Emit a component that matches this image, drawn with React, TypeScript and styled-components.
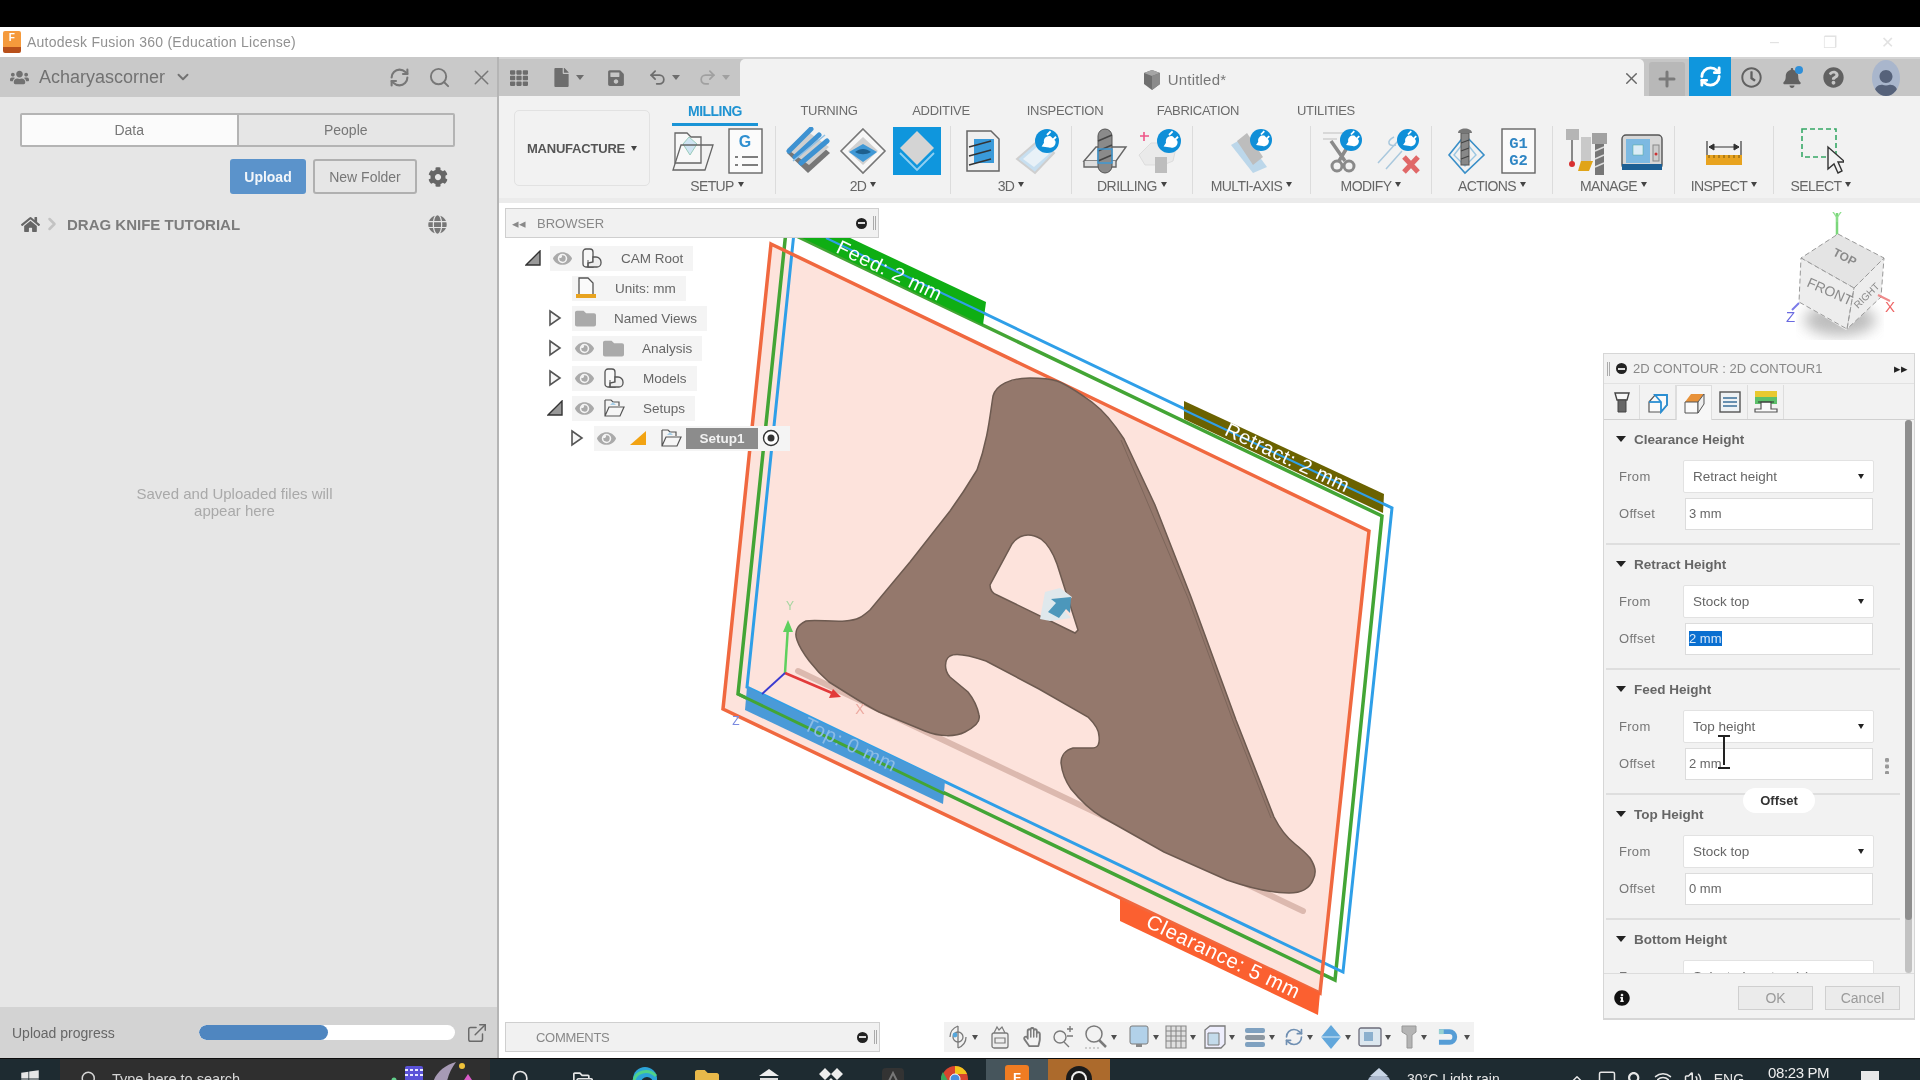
import React from "react";
import styled, { createGlobalStyle } from "styled-components";
import {
  FaBell,
  FaCog,
  FaEye,
  FaFile,
  FaFolder,
  FaGlobe,
  FaHome,
  FaInfoCircle,
  FaQuestionCircle,
  FaRegClock,
  FaRegFolderOpen,
  FaRegHandPaper,
  FaSave,
  FaSearch,
  FaTh,
  FaUser,
  FaUsers,
  FaWindows,
} from "react-icons/fa";
import {
  ChevronDown,
  ChevronRight,
  ChevronUp,
  ExternalLink,
  Monitor,
  Plus,
  RefreshCw,
  Redo2,
  Search,
  Undo2,
  Volume2,
  Wifi,
  X,
} from "lucide-react";

const GlobalStyle = createGlobalStyle`
  html, body {
    margin: 0;
    padding: 0;
    background: #fff;
    overflow: hidden;
  }
  * {
    box-sizing: border-box;
  }
`;

const Page = styled.div`
  width: 1920px;
  height: 1080px;
  display: flex;
  flex-direction: column;
  font-family: "Liberation Sans", Arial, sans-serif;
  background: #fff;
  overflow: hidden;
  filter: blur(0.45px);
`;
const BlackBar = styled.div`
  height: 27px;
  background: #000;
  flex: none;
`;
const TitleBar = styled.div`
  height: 30px;
  flex: none;
  display: flex;
  align-items: center;
  padding-left: 3px;
  background: #fff;
  color: #919191;
  font-size: 14px;
  letter-spacing: 0.25px;
  gap: 6px;
`;
const AppLogo = styled.div`
  width: 18px;
  height: 22px;
  border-radius: 2px;
  background: linear-gradient(#f59a3c 0 75%, #b8501a 75%);
  color: #fff;
  font-size: 10px;
  font-weight: 700;
  display: flex;
  justify-content: center;
  padding-top: 1px;
`;
const WindowControls = styled.div`
  margin-left: auto;
  display: flex;
  color: #e2e2e2;
  font-size: 16px;
  width: 150px;
  justify-content: space-between;
  padding-right: 26px;
`;
const Main = styled.div`
  flex: 1;
  display: flex;
  min-height: 0;
`;

/* data panel */
const DataPanel = styled.div`
  width: 499px;
  flex: none;
  display: flex;
  flex-direction: column;
  background: #e6e6e6;
  border-right: 2px solid #b5b5b5;
`;
const PanelHeader = styled.div`
  height: 40px;
  flex: none;
  background: #c9c9c9;
  display: flex;
  align-items: center;
  padding: 0 3px 0 10px;
  color: #727272;
  font-size: 18px;
`;
const ProjectName = styled.span`
  margin: 0 9px 0 10px;
`;
const HeaderTools = styled.div`
  margin-left: auto;
  display: flex;
  align-items: center;
  gap: 18px;
  color: #777;
`;
const DataTabs = styled.div`
  margin: 16px 42px 0 20px;
  height: 34px;
  display: flex;
  border: 2px solid #b4b4b4;
  border-radius: 2px;
`;
const DataTab = styled.div<{ $active?: boolean }>`
  flex: 1;
  display: flex;
  align-items: center;
  justify-content: center;
  font-size: 14px;
  color: #777;
  background: ${(p) => (p.$active ? "#fbfbfb" : "#e6e6e6")};
  border-right: ${(p) => (p.$active ? "2px solid #b4b4b4" : "none")};
`;
const DataActions = styled.div`
  display: flex;
  justify-content: flex-end;
  align-items: center;
  height: 35px;
  margin-top: 12px;
  padding-right: 49px;
  gap: 7px;
`;
const UploadButton = styled.div`
  width: 76px;
  height: 35px;
  background: #5b93cb;
  border-radius: 3px;
  color: #f2f6fa;
  font-weight: 700;
  font-size: 14px;
  display: flex;
  align-items: center;
  justify-content: center;
`;
const NewFolderButton = styled.div`
  width: 104px;
  height: 35px;
  border: 2px solid #b0b0b0;
  border-radius: 3px;
  color: #777;
  font-size: 14px;
  display: flex;
  align-items: center;
  justify-content: center;
  margin-right: 4px;
`;
const GearWrap = styled.div`
  color: #666;
  display: flex;
`;
const Breadcrumb = styled.div`
  display: flex;
  align-items: center;
  margin-top: 20px;
  padding: 0 50px 0 21px;
  height: 20px;
  color: #7c7c7c;
  font-size: 15px;
  font-weight: 700;
`;
const CrumbSep = styled.span`
  color: #c3c3c3;
  display: flex;
  margin: 0 5px 0 2px;
`;
const GlobeWrap = styled.div`
  margin-left: auto;
  color: #777;
  display: flex;
`;
const EmptyMessage = styled.div`
  flex: 1;
  padding: 251px 28px 0 0;
  text-align: center;
  font-size: 15px;
  line-height: 17px;
  color: #a9a9a9;
`;
const UploadFooter = styled.div`
  height: 51px;
  flex: none;
  background: #d3d3d3;
  display: flex;
  align-items: center;
  padding: 0 12px;
  font-size: 14px;
  color: #666;
  white-space: nowrap;
`;
const ProgressTrack = styled.div`
  width: 256px;
  height: 15px;
  margin-left: 84px;
  flex: none;
  border-radius: 8px;
  background: #fff;
  overflow: hidden;
`;
const ProgressFill = styled.div`
  height: 100%;
  background: #4f86c0;
  border-radius: 8px;
`;
const PopOut = styled.div`
  margin-left: 11px;
  display: flex;
  color: #6a6a6a;
`;

/* workspace */
const Workspace = styled.div`
  flex: 1;
  min-width: 0;
  display: flex;
  flex-direction: column;
`;
const TabStrip = styled.div`
  height: 39px;
  flex: none;
  display: flex;
  align-items: flex-end;
  border-top: 2px solid #d4d4d4;
  background: #c6c6c6;
`;
const Qat = styled.div`
  width: 241px;
  height: 100%;
  flex: none;
  display: flex;
  align-items: center;
  padding-left: 11px;
  color: #6d6d6d;
`;
const QatItem = styled.div<{ $width: number; $faded?: boolean }>`
  width: ${(p) => p.$width}px;
  display: flex;
  align-items: center;
  color: ${(p) => (p.$faded ? "#a0a0a0" : "#6d6d6d")};
`;
const Caret = styled.span`
  width: 0;
  height: 0;
  margin-left: 5px;
  border-left: 4px solid transparent;
  border-right: 4px solid transparent;
  border-top: 5px solid currentColor;
  display: inline-block;
`;
const DocTab = styled.div`
  width: 904px;
  flex: none;
  height: 100%;
  margin-top: 5px;
  padding-top: 4px;
  background: #f2f2f2;
  border-radius: 5px 5px 0 0;
  display: flex;
  align-items: center;
  justify-content: center;
  position: relative;
  font-size: 15px;
  letter-spacing: 0.2px;
  color: #777;
  gap: 6px;
  padding-right: 16px;
`;
const DocClose = styled.div`
  position: absolute;
  right: 3px;
  top: 10px;
  color: #666;
  display: flex;
`;
const PlusButton = styled.div`
  width: 36px;
  height: 34px;
  margin: 0 4px 0 5px;
  flex: none;
  background: #b8b8b8;
  border-radius: 3px 3px 0 0;
  color: #7a7a7a;
  display: flex;
  align-items: center;
  justify-content: center;
`;
const JobStatus = styled.div`
  width: 42px;
  height: 39px;
  flex: none;
  margin-top: -2px;
  background: #0f96dd;
  display: flex;
  align-items: center;
  justify-content: center;
  color: #fff;
`;
const StatusIcons = styled.div`
  flex: 1;
  height: 100%;
  display: flex;
  align-items: center;
  color: #616161;
`;
const StatusIcon = styled.div<{ $width: number }>`
  width: ${(p) => p.$width}px;
  display: flex;
  justify-content: center;
  position: relative;
`;
const BellDot = styled.span`
  position: absolute;
  right: 10px;
  top: -2px;
  width: 8px;
  height: 8px;
  border-radius: 50%;
  background: #2f8fd8;
`;
const Avatar = styled.div`
  width: 28px;
  height: 36px;
  border-radius: 50%;
  background: #a9b6cc;
  color: #56627a;
  overflow: hidden;
  display: flex;
  justify-content: center;
  align-items: flex-end;
  margin-left: 18px;
`;
const Ribbon = styled.div`
  height: 107px;
  flex: none;
  background: #f2f2f2;
  border-bottom: 5px solid #ebebeb;
  display: flex;
  padding-left: 15px;
`;
const ManufactureButton = styled.div`
  width: 136px;
  height: 76px;
  margin: 14px 9px 0 0;
  flex: none;
  border: 1px solid #e2e2e2;
  border-radius: 5px;
  display: flex;
  align-items: center;
  justify-content: center;
  font-size: 13px;
  font-weight: 700;
  color: #555;
  letter-spacing: -0.2px;
`;
const RibbonBody = styled.div`
  flex: 1;
  display: flex;
  flex-direction: column;
`;
const RibbonTabs = styled.div`
  height: 30px;
  flex: none;
  display: flex;
  padding-left: 13px;
`;
const RibbonTab = styled.div<{ $width: number; $active?: boolean }>`
  width: ${(p) => p.$width}px;
  height: 100%;
  display: flex;
  align-items: center;
  justify-content: center;
  padding-top: 2px;
  font-size: ${(p) => (p.$active ? 14 : 13)}px;
  letter-spacing: ${(p) => (p.$active ? "-0.5px" : "-0.3px")};
  color: ${(p) => (p.$active ? "#1f93d2" : "#6b6b6b")};
  font-weight: ${(p) => (p.$active ? 700 : 400)};
  border-bottom: 3px solid ${(p) => (p.$active ? "#1a94d6" : "transparent")};
`;
const RibbonGroups = styled.div`
  flex: 1;
  display: flex;
  padding-bottom: 4px;
`;
const Group = styled.div<{ $width: number }>`
  width: ${(p) => p.$width}px;
  flex: none;
  display: flex;
  flex-direction: column;
  align-items: center;
  justify-content: space-between;
  border-right: 1px solid #dcdcdc;
  &:last-child {
    border-right: none;
  }
`;
const GroupIcons = styled.div<{ $gap?: number }>`
  height: 50px;
  display: flex;
  align-items: center;
  justify-content: center;
  gap: ${(p) => p.$gap ?? 6}px;
`;
const GroupLabel = styled.div`
  font-size: 14px;
  letter-spacing: -0.6px;
  display: flex;
  align-items: center;
  color: #666;
`;
const SmallCaret = styled.span`
  width: 0;
  height: 0;
  margin: 0 0 3px 4px;
  border-left: 3px solid transparent;
  border-right: 3px solid transparent;
  border-top: 5px solid #444;
`;
const MenuCaret = styled(SmallCaret)`
  margin: 0 0 0 6px;
`;
const SelectedTool = styled.div`
  width: 48px;
  height: 48px;
  background: #0f96dd;
  display: flex;
  align-items: center;
  justify-content: center;
`;

/* viewport */
const Viewport = styled.div`
  flex: 1;
  position: relative;
  background: #fff;
  min-height: 0;
`;
const Scene = styled.svg`
  position: absolute;
  left: 0;
  top: 0;
`;
const BrowserPanel = styled.div`
  position: absolute;
  left: 6px;
  top: 5px;
  width: 374px;
`;
const PanelBar = styled.div`
  height: 30px;
  background: #f1f1f1;
  border: 1px solid #cfcfcf;
  display: flex;
  align-items: center;
  padding: 0 2px 0 6px;
  font-size: 13px;
  color: #888;
`;
const BarLabel = styled.span<{ $indent: number }>`
  margin-left: ${(p) => p.$indent}px;
`;
const BarTools = styled.div`
  margin-left: auto;
  display: flex;
  align-items: center;
  gap: 6px;
`;
const PinDot = styled.span`
  width: 11px;
  height: 11px;
  border-radius: 50%;
  background: #222;
  position: relative;
  &::after {
    content: "";
    position: absolute;
    left: 2px;
    right: 2px;
    top: 4.5px;
    height: 2px;
    background: #ddd;
  }
`;
const Grip = styled.span`
  width: 3px;
  height: 14px;
  border-left: 1px solid #aaa;
  border-right: 1px solid #aaa;
`;
const Tree = styled.div`
  display: flex;
  flex-direction: column;
  padding-top: 5px;
`;
const TreeRow = styled.div<{ $indent: number }>`
  height: 30px;
  display: flex;
  align-items: center;
  padding-left: ${(p) => p.$indent}px;
`;
const Expander = styled.div`
  width: 22px;
  margin-right: 6px;
  flex: none;
  display: flex;
  justify-content: center;
`;
const Chip = styled.div`
  height: 25px;
  background: #f4f4f4;
  display: flex;
  align-items: center;
  padding: 0 10px 0 3px;
  gap: 9px;
  font-size: 13.5px;
  color: #666;
`;
const ChipText = styled.span`
  margin-left: 9px;
`;
const ActiveSetup = styled.span`
  background: #8c8c8c;
  color: #f1f1f1;
  font-weight: 700;
  height: 21px;
  width: 72px;
  display: flex;
  align-items: center;
  justify-content: center;
  margin: 0 -5px;
`;
const WarnWrap = styled.span`
  display: flex;
  margin: 0 4px;
`;
const EyeIcon = styled.span`
  color: #aaa;
  display: flex;
`;
const CommentsBar = styled(PanelBar)`
  position: absolute;
  left: 6px;
  bottom: 6px;
  width: 375px;
  font-size: 13px;
  letter-spacing: -0.3px;
`;
const NavBar = styled.div`
  position: absolute;
  left: 445px;
  bottom: 6px;
  width: 530px;
  height: 30px;
  background: #f2f2f2;
  display: flex;
  align-items: center;
  padding-left: 3px;
  color: #666;
`;
const NavItem = styled.div<{ $width: number }>`
  width: ${(p) => p.$width}px;
  flex: none;
  display: flex;
  align-items: center;
  opacity: 0.85;
`;
const NavCaret = styled(SmallCaret)`
  margin: 0 0 0 3px;
  border-top-color: #333;
`;

/* operation dialog */
const Dialog = styled.div`
  position: absolute;
  left: 1104px;
  top: 150px;
  width: 312px;
  height: 667px;
  background: #f2f2f2;
  border: 1px solid #d6d6d6;
  border-bottom-width: 2px;
  display: flex;
  flex-direction: column;
`;
const DialogHeader = styled.div`
  height: 30px;
  flex: none;
  border-bottom: 1px solid #e2e2e2;
  display: flex;
  align-items: center;
  padding: 0 6px 0 3px;
  font-size: 13px;
  color: #888;
  gap: 6px;
`;
const CollapseArrows = styled.span`
  color: #222;
  font-size: 13px;
`;
const DialogTabs = styled.div`
  height: 36px;
  flex: none;
  display: flex;
  border-bottom: 1px solid #d0d0d0;
`;
const DialogTab = styled.div<{ $active?: boolean }>`
  width: 36px;
  display: flex;
  align-items: center;
  justify-content: center;
  margin-top: 1px;
  background: ${(p) => (p.$active ? "#f7f7f7" : "transparent")};
  border-right: 1px solid #ddd;
  border-left: ${(p) => (p.$active ? "1px solid #ddd" : "none")};
  border-top: ${(p) => (p.$active ? "1px solid #ddd" : "none")};
  margin-bottom: ${(p) => (p.$active ? "-1px" : "0")};
`;
const DialogBody = styled.div`
  flex: 1;
  min-height: 0;
  display: flex;
  overflow: hidden;
`;
const Sections = styled.div`
  width: 296px;
  flex: none;
`;
const Section = styled.div`
  height: 125px;
  padding-top: 9px;
  margin-left: 2px;
  border-bottom: 2px solid #dedede;
  position: relative;
`;
const SectionTitle = styled.div`
  height: 20px;
  margin-bottom: 9px;
  display: flex;
  align-items: center;
  padding-left: 10px;
  gap: 8px;
  font-size: 13.5px;
  font-weight: 700;
  color: #666;
`;
const DownTriangle = styled.span`
  width: 0;
  height: 0;
  border-left: 5px solid transparent;
  border-right: 5px solid transparent;
  border-top: 6px solid #222;
`;
const FieldRow = styled.div`
  height: 37px;
  display: flex;
  align-items: center;
  padding-left: 13px;
  font-size: 13px;
  color: #777;
  letter-spacing: 0.3px;
`;
const FieldLabel = styled.div`
  width: 64px;
  flex: none;
`;
const SelectBox = styled.div`
  width: 191px;
  height: 33px;
  background: #fff;
  border: 1px solid #e2e2e2;
  border-radius: 2px;
  display: flex;
  align-items: center;
  padding: 0 9px;
  font-size: 13.5px;
  color: #666;
  justify-content: space-between;
  letter-spacing: 0;
`;
const SelectCaret = styled(SmallCaret)`
  margin: 0;
  border-top-color: #222;
`;
const OffsetBox = styled.div`
  width: 188px;
  height: 32px;
  margin-left: 2px;
  background: #fff;
  border: 1px solid #dcdcdc;
  display: flex;
  align-items: center;
  padding: 0 3px;
  font-size: 13px;
  color: #666;
  letter-spacing: 0;
`;
const Selected = styled.span`
  background: #0a6fd0;
  color: #d8e8f8;
`;
const Kebab = styled.div`
  position: absolute;
  right: 11px;
  bottom: 19px;
  width: 4px;
  height: 16px;
  background: radial-gradient(circle at 50% 2px, #999 2px, transparent 2.4px) 0 0 / 4px 6.5px repeat-y;
`;
const ScrollTrack = styled.div`
  width: 7px;
  margin-left: 5px;
  background: #c2c2c2;
  border-radius: 4px;
  flex: none;
  height: 100%;
`;
const ScrollThumb = styled.div`
  height: 500px;
  background: #8e8e8e;
  border-radius: 4px;
`;
const OffsetTip = styled.div`
  position: absolute;
  left: 139px;
  top: 434px;
  width: 72px;
  height: 25px;
  border-radius: 13px;
  background: #fff;
  display: flex;
  align-items: center;
  justify-content: center;
  font-size: 13px;
  font-weight: 700;
  color: #333;
`;
const IBeam = styled.div`
  position: absolute;
  left: 114px;
  top: 381px;
  width: 12px;
  height: 30px;
  &::before {
    content: "";
    position: absolute;
    left: 5px;
    top: 0;
    width: 2px;
    height: 30px;
    background: #222;
  }
  &::after {
    content: "";
    position: absolute;
    left: 0;
    right: 0;
    top: 0;
    height: 30px;
    border-top: 2px solid #222;
    border-bottom: 2px solid #222;
  }
`;
const DialogFooter = styled.div`
  height: 45px;
  flex: none;
  border-top: 1px solid #dcdcdc;
  background: #f2f2f2;
  display: flex;
  align-items: center;
  padding: 3px 14px 0 10px;
  color: #111;
`;
const FooterButton = styled.div<{ $width: number }>`
  width: ${(p) => p.$width}px;
  height: 24px;
  border: 1px solid #cfcfcf;
  background: #ebebeb;
  margin-left: 12px;
  display: flex;
  align-items: center;
  justify-content: center;
  font-size: 14px;
  color: #9a9a9a;
`;
const FooterSpacer = styled.div`
  flex: 1;
`;

/* windows taskbar */
const Taskbar = styled.div`
  height: 22px;
  flex: none;
  background: #1e2b31;
  display: flex;
  overflow: hidden;
  border-top: 1px solid #0c0c0c;
  color: #e6e6e6;
`;
const StartCell = styled.div`
  width: 60px;
  height: 40px;
  flex: none;
  display: flex;
  align-items: center;
  justify-content: center;
`;
const SearchBox = styled.div`
  width: 430px;
  height: 40px;
  flex: none;
  background: #2f2f2f;
  display: flex;
  align-items: center;
  padding-left: 20px;
  font-size: 14.5px;
  color: #d5d5d5;
  gap: 14px;
`;
const SearchArt = styled.div`
  margin-left: auto;
  margin-top: -8px;
  display: flex;
  align-items: center;
  padding-right: 10px;
`;
const AppCell = styled.div<{ $bg?: string }>`
  width: 62px;
  height: 40px;
  flex: none;
  display: flex;
  align-items: center;
  justify-content: center;
  background: ${(p) => p.$bg || "transparent"};
`;
const Tray = styled.div`
  flex: 1;
  height: 40px;
  display: flex;
  align-items: center;
  padding-left: 255px;
  font-size: 14px;
`;
const TrayText = styled.span`
  margin: 0 68px 0 14px;
`;
const TrayIcons = styled.div`
  display: flex;
  align-items: center;
  gap: 12px;
`;
const Clock = styled.div`
  margin: -14px 0 0 24px;
  font-size: 15px;
  letter-spacing: -0.4px;
  color: #eee;
`;
const NoteIcon = styled.div`
  width: 18px;
  height: 16px;
  margin-left: 32px;
  background: #e8e8e8;
`;

/* ---------- drawings ---------- */
const PlugBadge = ({ x, y, r = 10 }: { x: number; y: number; r?: number }) => (
  <g>
    <circle cx={x} cy={y} r={r} fill="#0f8fd8" />
    <path
      d={`M${x - r * 0.45} ${y + r * 0.45} l${r * 0.2} ${-r * 0.3} a${r * 0.45} ${r * 0.45} 0 0 1 ${r * 0.55} ${-r * 0.55} l${r * 0.4} ${r * 0.4} a${r * 0.45} ${r * 0.45} 0 0 1 ${-r * 0.55} ${r * 0.55} z`}
      fill="#fff"
    />
    <path
      d={`M${x} ${y - r * 0.5} l${r * 0.3} ${-r * 0.3} M${x + r * 0.45} ${y - r * 0.05} l${r * 0.3} ${-r * 0.3}`}
      stroke="#fff"
      strokeWidth={r * 0.16}
    />
  </g>
);

const Ic = ({ w = 48, children }: { w?: number; children: React.ReactNode }) => (
  <svg width={w} height="48" viewBox={`0 0 ${w} 48`}>
    {children}
  </svg>
);

const SetupFolderIcon = () => (
  <Ic w={44}>
    <path d="M4 6h12l4 4h10v26H4z" fill="#f8f8f8" stroke="#666" strokeWidth="1.3" />
    <path d="M12 17l6-7 8 7-7 11z" fill="#cfe4f3" stroke="#9cb" strokeWidth="1" />
    <path d="M10 18h32l-8 25H2z" fill="none" stroke="#666" strokeWidth="1.3" />
  </Ic>
);
const GCodeIcon = () => (
  <Ic w={36}>
    <rect x="1" y="2" width="33" height="44" fill="#fbfbfb" stroke="#666" strokeWidth="1.4" />
    <text x="17" y="20" textAnchor="middle" fontSize="16" fontWeight="700" fill="#2f8fd0" fontFamily="Liberation Sans">
      G
    </text>
    <path d="M7 30h3M14 30h16M7 38h3M14 38h16" stroke="#555" strokeWidth="1.5" />
  </Ic>
);
const AdaptiveIcon = () => (
  <Ic>
    <path d="M2 26L24 8l21 18-22 20z" fill="#777" />
    <path d="M2 22L22 4l22 16-20 18z" fill="#cfcfcf" />
    <path d="M4 24L26 2M10 30L34 8M16 36L42 14" stroke="#3d92d2" strokeWidth="5" strokeLinecap="round" />
    <path d="M8 34L40 8" stroke="#8fc1e6" strokeWidth="1.5" />
  </Ic>
);
const PocketIcon = () => (
  <Ic>
    <path d="M24 2l22 22-22 22L2 24z" fill="#f7f7f7" stroke="#777" strokeWidth="1.6" />
    <path d="M24 10l15 14-15 14L9 24z" fill="#d0d0d0" />
    <path d="M10 25l14-8 14 8-14 10z" fill="#3f98d6" />
    <path d="M16 25c5-4 11-4 16 0-5 3-11 3-16 0z" fill="#1d5f8e" />
  </Ic>
);
const ContourIcon = () => (
  <svg width="40" height="44" viewBox="0 0 40 44">
    <path d="M20 2l17 17-17 17L3 19z" fill="#d4d4d4" />
    <path d="M3 24l17 17 17-17" fill="none" stroke="#8fd0f2" strokeWidth="1.8" />
  </svg>
);
const Steep3dIcon = () => (
  <Ic w={40}>
    <path d="M5 4h24l8 8v32H5z" fill="#efefef" stroke="#666" strokeWidth="1.5" />
    <path d="M12 12h20v24H12z" fill="#3a9ad9" />
    <path d="M7 20l22-6M7 29l22-6M7 38l22-6" stroke="#333" strokeWidth="1.5" />
  </Ic>
);
const Plug3dIcon = () => (
  <Ic w={46}>
    <path d="M3 32L26 12l14 14-19 20z" fill="#c7dff0" stroke="#cfcfcf" strokeWidth="2" />
    <path d="M9 32l16-14 10 9-15 13z" fill="#e8f1f7" />
    <PlugBadge x={33} y={14} r={12} />
  </Ic>
);
const DrillIcon = () => (
  <Ic w={46}>
    <path d="M2 34L14 20h30l-10 14z" fill="#efefef" stroke="#666" strokeWidth="1.4" />
    <path d="M2 34v6h32v-6" fill="#ddd" stroke="#666" strokeWidth="1.4" />
    <rect x="16" y="2" width="14" height="44" rx="7" fill="#8a8a8a" stroke="#555" />
    <path d="M16 14l14-6M16 24l14-6M16 34l14-6" stroke="#444" strokeWidth="1.4" />
    <rect x="16" y="22" width="14" height="14" fill="none" stroke="#3a9ad9" strokeWidth="1.4" />
  </Ic>
);
const BoreIcon = () => (
  <Ic w={46}>
    <path d="M2 28l12-12h26l-4 18-10 4H8z" fill="#eaeaea" stroke="#ddd" />
    <rect x="18" y="30" width="12" height="16" fill="#bdbdbd" />
    <path d="M3 9h9M7 5v9" stroke="#e58" strokeWidth="1.6" />
    <PlugBadge x={32} y={14} r={12} />
  </Ic>
);
const MultiAxisIcon = () => (
  <Ic w={46}>
    <path d="M2 18l14-8 22 30-14 6z" fill="#bcd7ea" />
    <path d="M8 14l10-8 16 24-10 8z" fill="#bdbdbd" />
    <PlugBadge x={32} y={13} r={11} />
  </Ic>
);
const ScissorsIcon = () => (
  <Ic w={46}>
    <path d="M2 6h22M2 12h14" stroke="#cfcfcf" strokeWidth="1.4" />
    <path d="M10 14l14 20M30 14L18 34" stroke="#8a8a8a" strokeWidth="3.5" />
    <circle cx="16" cy="39" r="5" fill="none" stroke="#8a8a8a" strokeWidth="3" />
    <circle cx="28" cy="39" r="5" fill="none" stroke="#8a8a8a" strokeWidth="3" />
    <PlugBadge x={30} y={13} r={11} />
  </Ic>
);
const DeleteIcon = () => (
  <Ic w={46}>
    <path d="M2 36L22 14M10 42L26 24M18 10c-8 4-6 10 2 8" fill="none" stroke="#a9c8dd" strokeWidth="1.5" />
    <path d="M28 30l14 15M42 30L28 45" stroke="#e06868" strokeWidth="5" />
    <PlugBadge x={32} y={13} r={11} />
  </Ic>
);
const ActionIcon = () => (
  <Ic w={40}>
    <path d="M18 8L37 28 18 46 2 28z" fill="none" stroke="#3a8fc8" strokeWidth="1.6" />
    <path d="M18 14l11 14-11 11L7 28z" fill="none" stroke="#9cc7e2" strokeWidth="1.4" />
    <rect x="14" y="6" width="8" height="32" fill="#888" stroke="#555" />
    <path d="M11 6c0-6 14-6 14 0z" fill="#777" />
    <path d="M14 16l8-3M14 24l8-3M14 32l8-3" stroke="#444" strokeWidth="1.3" />
  </Ic>
);
const G1G2Icon = () => (
  <Ic w={36}>
    <rect x="1" y="2" width="33" height="44" fill="#fbfbfb" stroke="#666" strokeWidth="1.4" />
    <text x="17.5" y="21" textAnchor="middle" fontSize="15.5" fontWeight="700" fill="#2f86c4" fontFamily="Liberation Mono">
      G1
    </text>
    <text x="17.5" y="38" textAnchor="middle" fontSize="15.5" fontWeight="700" fill="#2f86c4" fontFamily="Liberation Mono">
      G2
    </text>
  </Ic>
);
const ToolLibIcon = () => (
  <Ic>
    <rect x="2" y="2" width="13" height="11" fill="#b5b5b5" />
    <path d="M8 13v22" stroke="#888" strokeWidth="2" />
    <circle cx="8" cy="37" r="3" fill="#d83030" />
    <rect x="17" y="10" width="10" height="24" fill="#c9c9c9" />
    <path d="M17 34h12l-4 10h-11z" fill="#e0a418" />
    <rect x="31" y="16" width="9" height="32" fill="#777" />
    <rect x="28" y="6" width="15" height="11" fill="#a2a2a2" />
    <path d="M31 24l9-4M31 32l9-4M31 40l9-4" stroke="#ddd" strokeWidth="1.5" />
  </Ic>
);
const MachineIcon = () => (
  <Ic w={44}>
    <rect x="2" y="8" width="40" height="34" rx="4" fill="#d7d7d7" stroke="#555" strokeWidth="1.4" />
    <rect x="6" y="12" width="24" height="24" fill="#7db9e2" />
    <rect x="13" y="18" width="10" height="10" fill="#dcecf6" stroke="#5a9" strokeWidth="0.5" />
    <rect x="33" y="18" width="6" height="16" fill="#ccc" stroke="#888" />
    <circle cx="36" cy="27" r="1.5" fill="#c33" />
    <rect x="2" y="37" width="40" height="6" fill="#1c5f94" />
  </Ic>
);
const MeasureIcon = () => (
  <Ic w={40}>
    <path d="M3 14v24M37 14v24" stroke="#555" strokeWidth="1.4" />
    <path d="M5 20h30M5 20l5-3v6zM35 20l-5-3v6z" fill="#333" stroke="#333" strokeWidth="1" />
    <rect x="2" y="28" width="36" height="10" fill="#e8a31f" />
    <path d="M5 28v3M10 28v3M15 28v3M20 28v3M25 28v3M30 28v3M35 28v3" stroke="#7a5a10" strokeWidth="1" />
  </Ic>
);
const SelectIcon = () => (
  <Ic w={46}>
    <rect x="4" y="2" width="34" height="28" fill="none" stroke="#36a866" strokeWidth="1.6" strokeDasharray="5 3" />
    <path d="M30 20v22l6-5 4 9 4-2-4-9h7z" fill="#f2f2f2" stroke="#333" strokeWidth="1.4" />
  </Ic>
);
const FusionTile = () => (
  <svg width="26" height="30" viewBox="0 0 26 30">
    <rect x="1" y="1" width="24" height="28" rx="3" fill="#ef7c22" />
    <text x="13" y="18" textAnchor="middle" fontSize="13" fontWeight="700" fill="#fff" fontFamily="Liberation Sans">
      F
    </text>
  </svg>
);
const CubeMini = () => (
  <svg width="20" height="22" viewBox="0 0 20 22">
    <path d="M2 4l8-3 8 3v11l-8 6-8-6z" fill="#6f6f6f" />
    <path d="M2 4l8 3 8-3-8-3z" fill="#a5a5a5" />
    <path d="M10 7v14l8-6V4z" fill="#8b8b8b" />
  </svg>
);
const ModelIcon = () => (
  <svg width="22" height="22" viewBox="0 0 22 22">
    <path d="M2 5a3 3 0 0 1 3-3h4a3 3 0 0 1 3 3v15H5a3 3 0 0 1-3-3z" fill="#f8f8f8" stroke="#555" strokeWidth="1.3" />
    <path d="M12 10h3a5 5 0 0 1 5 5v1a4 4 0 0 1-4 4h-9v-4l5-1z" fill="#eee" stroke="#555" strokeWidth="1.3" />
    <path d="M7 13v7" stroke="#555" />
  </svg>
);
const UnitsIcon = () => (
  <svg width="22" height="24" viewBox="0 0 22 24">
    <path d="M4 2h9l5 5v13H4z" fill="#fafafa" stroke="#555" strokeWidth="1.3" />
    <rect x="1" y="18" width="20" height="4" fill="#e8a31f" />
  </svg>
);
const OpenFolderIcon = () => (
  <svg width="22" height="20" viewBox="0 0 22 20">
    <path d="M2 2h6l2 2h6v4" fill="none" stroke="#555" strokeWidth="1.2" />
    <path d="M2 2v16h15l4-9H6l-4 9" fill="#f6f6f6" stroke="#555" strokeWidth="1.2" />
    <path d="M7 7l3-3 3 3z" fill="#a8cfe8" />
  </svg>
);
const TreeOpen = () => (
  <svg width="16" height="16" viewBox="0 0 16 16">
    <path d="M1 15L15 1v14z" fill="#999" stroke="#333" strokeWidth="1.4" />
  </svg>
);
const TreeClosed = () => (
  <svg width="14" height="18" viewBox="0 0 14 18">
    <path d="M2 2l10 7-10 7z" fill="#f6f6f6" stroke="#555" strokeWidth="1.6" />
  </svg>
);
const Radio = () => (
  <svg width="18" height="18" viewBox="0 0 18 18">
    <circle cx="9" cy="9" r="7.5" fill="#fff" stroke="#333" strokeWidth="1.4" />
    <circle cx="9" cy="9" r="3.5" fill="#333" />
  </svg>
);
const Warn = () => (
  <svg width="18" height="16" viewBox="0 0 18 16">
    <path d="M1 15L17 1v14z" fill="#f2a312" />
  </svg>
);
const FolderSolid = () => (
  <EyeIcon>
    <FaFolder size={21} />
  </EyeIcon>
);

const ToolTabIcon = () => (
  <svg width="20" height="24" viewBox="0 0 20 24">
    <path d="M3 3h14l-2 7H5z" fill="#f8f8f8" stroke="#444" strokeWidth="1.4" />
    <path d="M6 10h8v12H6z" fill="#666" stroke="#444" />
  </svg>
);
const GeomTabIcon = () => (
  <svg width="22" height="24" viewBox="0 0 22 24">
    <path d="M2 12l6-7h12v10l-6 7H2z" fill="#fafafa" stroke="#555" strokeWidth="1.2" />
    <path d="M8 5h12v10l-6 7V12z" fill="none" stroke="#2a8fd3" strokeWidth="1.8" />
    <path d="M2 12h12" stroke="#2a8fd3" strokeWidth="1.8" />
  </svg>
);
const HeightsTabIcon = () => (
  <svg width="22" height="24" viewBox="0 0 22 24">
    <path d="M8 3h13l-6 8H2z" fill="#e8923a" />
    <path d="M2 11h13v11H2z" fill="#fafafa" stroke="#555" />
    <path d="M15 11l6-8v10l-6 9z" fill="#eee" stroke="#555" />
  </svg>
);
const PassesTabIcon = () => (
  <svg width="22" height="22" viewBox="0 0 22 22">
    <rect x="1" y="1" width="20" height="20" fill="#eef2f5" stroke="#555" strokeWidth="1.4" />
    <path d="M4 7h14M4 11h14M4 15h14" stroke="#3a6f99" strokeWidth="1.4" />
  </svg>
);
const LinkTabIcon = () => (
  <svg width="24" height="24" viewBox="0 0 24 24">
    <rect x="1" y="1" width="22" height="6" fill="#e8c930" />
    <rect x="1" y="7" width="22" height="7" fill="#5cc06a" />
    <path d="M1 19h6v-7h10v7h6v3H1z" fill="#fafafa" stroke="#555" strokeWidth="1.2" />
    <path d="M4 12h16" stroke="#333" />
  </svg>
);

const ViewCube = () => (
  <g>
    <filter id="cubeShadow">
      <feGaussianBlur stdDeviation="7" />
    </filter>
    <ellipse cx="1840" cy="320" rx="36" ry="16" fill="#a8a8a8" opacity="0.75" filter="url(#cubeShadow)" />
    <path d="M1837 213v22" stroke="#7bd67b" strokeWidth="2.5" />
    <text x="1837" y="222" textAnchor="middle" fontSize="15" fill="#8fe08f" fontFamily="Liberation Sans">
      Y
    </text>
    <path d="M1838 234l46 24-3 39-35 33-47-28 2-44z" fill="#efefef" />
    <path d="M1838 234l46 24-30 30-53-30z" fill="#e4e4e4" stroke="#999" strokeWidth="1" strokeDasharray="5 3" />
    <path d="M1801 258l53 30-7 41-48-27zM1854 288l30-30-3 39-34 32z" fill="#ededed" stroke="#999" strokeWidth="1" strokeDasharray="5 3" />
    <text transform="translate(1832 255) rotate(27)" fontSize="12" fill="#8a8a8a" fontFamily="Liberation Sans" fontWeight="700">
      TOP
    </text>
    <text transform="translate(1806 286) rotate(24)" fontSize="14" fill="#8a8a8a" fontFamily="Liberation Sans">
      FRONT
    </text>
    <text transform="translate(1858 309) rotate(-45)" fontSize="10" fill="#8a8a8a" fontFamily="Liberation Sans">
      RIGHT
    </text>
    <path d="M1878 295l12 6" stroke="#ef8a8a" strokeWidth="2" />
    <text x="1885" y="312" fontSize="15" fill="#e66" fontFamily="Liberation Sans">
      X
    </text>
    <path d="M1799 303l-7 7" stroke="#7a7ae8" strokeWidth="2" />
    <text x="1786" y="322" fontSize="15" fill="#6a6ae0" fontFamily="Liberation Sans">
      Z
    </text>
  </g>
);

const LabelText = ({
  x,
  y,
  fill = "#fff",
  size = 20,
  children,
}: {
  x: number;
  y: number;
  fill?: string;
  size?: number;
  children: React.ReactNode;
}) => (
  <text
    transform={`translate(${x} ${y}) rotate(25.6)`}
    textAnchor="middle"
    dominantBaseline="middle"
    fontFamily="Liberation Sans"
    fontSize={size}
    letterSpacing="0.8"
    fill={fill}
  >
    {children}
  </text>
);

const HeightsScene = () => (
  <Scene width="1421" height="861" viewBox="499 203 1421 861">
    <path d="M771 244L1369 531 1320 993 723 709z" fill="#fde3dc" />
    <path d="M786 231L1382 516 1335 980 738 694z" fill="none" stroke="#43a535" strokeWidth="3.5" />
    <path d="M795 223L1392 508 1343 972 747 687z" fill="none" stroke="#2f9fe8" strokeWidth="3" />
    <path d="M771 244L1369 531 1320 993 723 709z" fill="none" stroke="#f0683f" strokeWidth="3.5" />

    <path d="M798 236L846 236 986 302 983 325z" fill="#0fae14" />
    <path d="M826 238L986 314" stroke="#2f9fe8" strokeWidth="2" />
    <LabelText x={889} y={272}>Feed: 2 mm</LabelText>
    <path d="M1184 401L1384 494 1383 513 1184 419z" fill="#6b6200" />
    <path d="M1184 410L1392 508" stroke="#2f9fe8" strokeWidth="2" />
    <LabelText x={1287} y={459}>Retract: 2 mm</LabelText>
    <path d="M747 687L945 781 943 804 745 710z" fill="#4a9ad8" />
    <path d="M738 694L945 794" stroke="#43a535" strokeWidth="3" />
    <path d="M1120 899L1320 993 1318 1015 1120 921z" fill="#fb6030" />
    <LabelText x={1223} y={958} size={20.5}>Clearance: 5 mm</LabelText>

    <path d="M798 671L1303 911" stroke="#dcb9af" strokeWidth="6" strokeLinecap="round" />
    <path
      fillRule="evenodd"
      fill="#94786c"
      stroke="#6d5a50"
      strokeWidth="1.5"
      d="M1030 378C1010 378 996 385 993 396C990 415 988 440 977 470C965 490 958 500 950 511L910 562L870 610C862 617 858 620 845 621C830 622 815 619 806 621C797 625 794 632 797 640C801 652 815 670 829 682C850 695 865 705 879 712L925 731C940 737 955 737 965 732C975 727 981 722 979 715C977 705 972 697 968 692L950 677C944 670 944 660 950 656C955 653 965 654 986 661L1039 689L1088 717C1095 724 1099 730 1099 736C1100 744 1098 748 1092 748L1073 748C1065 750 1061 756 1061 763C1062 772 1066 782 1071 789C1080 800 1090 810 1102 817L1164 852L1227 880C1250 888 1270 893 1289 893C1300 893 1309 890 1313 880C1317 872 1315 866 1310 858C1305 852 1300 848 1295 844C1285 836 1278 825 1274 817L1236 720L1191 597L1155 505L1124 439C1115 425 1105 412 1093 403C1082 395 1070 386 1057 381C1048 378 1040 378 1030 378Z M1028 535C1020 535 1015 540 1012 544L990 585C990 590 993 594 997 595L1075 633L1078 630L1057 564C1052 550 1045 542 1041 539C1036 536 1032 535 1028 535Z"
    />
    <path d="M1124 439L1191 597L1236 720L1274 817" fill="none" stroke="#7d665b" strokeWidth="1" transform="translate(-3 1)" />

    <LabelText x={850} y={746} fill="#8bbce6">Top: 0 mm</LabelText>

    <path d="M785 673L788 626" stroke="#5ed05e" strokeWidth="2.5" />
    <path d="M788 620l-5 12h10z" fill="#5ed05e" />
    <path d="M785 673L832 693" stroke="#e23a3a" strokeWidth="2.5" />
    <path d="M841 697l-12 1 4-9z" fill="#e23a3a" />
    <path d="M785 673L762 694" stroke="#3a3ad0" strokeWidth="1.8" />
    <text x="790" y="610" fontSize="12" fontFamily="Liberation Sans" textAnchor="middle" fill="#a5d69f">Y</text>
    <text x="860" y="714" fontSize="14" fontFamily="Liberation Sans" textAnchor="middle" fill="#eda9a0">X</text>
    <text x="736" y="725" fontSize="12" fontFamily="Liberation Sans" textAnchor="middle" fill="#7a8ae0">Z</text>

    <path d="M1045 592l15-4 12 9-9 12 8 9-21 3-10-2z" fill="#dfe8ec" />
    <path d="M1048 612l8-9-5-4 20-2-1 16-4-4-7 9z" fill="#4c97bb" />
    <ViewCube />
  </Scene>
);

const navItems: { w: number; caret: boolean; icon: React.ReactNode }[] = [
  {
    w: 43,
    caret: true,
    icon: (
      <svg width="22" height="26" viewBox="0 0 22 26">
        <circle cx="11" cy="13" r="5" fill="none" stroke="#666" strokeWidth="1.3" />
        <path d="M11 2v22M3 13c0-6 3-9 8-11M19 13c0 6-3 9-8 11" fill="none" stroke="#666" strokeWidth="1.3" />
        <circle cx="8" cy="11" r="2.4" fill="#3a9ad9" />
      </svg>
    ),
  },
  {
    w: 32,
    caret: false,
    icon: (
      <svg width="20" height="24" viewBox="0 0 20 24">
        <rect x="2" y="8" width="16" height="15" rx="2" fill="#eee" stroke="#666" strokeWidth="1.3" />
        <path d="M5 13h10v5H5zM4 8l3-6 2 3 3-3 3 6" fill="none" stroke="#666" strokeWidth="1.2" />
      </svg>
    ),
  },
  { w: 30, caret: false, icon: <FaRegHandPaper size={20} color="#666" /> },
  {
    w: 32,
    caret: false,
    icon: (
      <svg width="22" height="24" viewBox="0 0 22 24">
        <circle cx="8" cy="12" r="6" fill="none" stroke="#666" strokeWidth="1.4" />
        <path d="M12 17l5 5M15 4h6M18 1v6M15 11h6" stroke="#666" strokeWidth="1.4" />
      </svg>
    ),
  },
  {
    w: 44,
    caret: true,
    icon: (
      <svg width="24" height="26" viewBox="0 0 24 26">
        <circle cx="10" cy="10" r="8" fill="none" stroke="#666" strokeWidth="1.5" />
        <path d="M15 16l7 7" stroke="#666" strokeWidth="2.5" />
        <path d="M1 24h14" stroke="#999" strokeDasharray="2 2" />
      </svg>
    ),
  },
  {
    w: 37,
    caret: true,
    icon: (
      <svg width="22" height="24" viewBox="0 0 22 24">
        <rect x="2" y="1" width="18" height="18" rx="2" fill="#a8cce8" stroke="#666" />
        <path d="M8 19h6v3H8z" fill="#777" />
      </svg>
    ),
  },
  {
    w: 39,
    caret: true,
    icon: (
      <svg width="22" height="24" viewBox="0 0 22 24">
        <path d="M1 1h20v22H1zM1 6h20M1 11h20M1 16h20M6 1v22M11 1v22M16 1v22" fill="#ddd" stroke="#777" strokeWidth="1.1" />
      </svg>
    ),
  },
  {
    w: 40,
    caret: true,
    icon: (
      <svg width="22" height="24" viewBox="0 0 22 24">
        <path d="M1 5l5-4h15v18l-4 4H1z" fill="#eef" stroke="#666" strokeWidth="1.3" />
        <path d="M4 8h11v12H4z" fill="#bcd7ea" stroke="#666" />
      </svg>
    ),
  },
  {
    w: 40,
    caret: true,
    icon: (
      <svg width="22" height="22" viewBox="0 0 22 22">
        <rect x="1" y="2" width="20" height="5" rx="2" fill="#6b94b8" />
        <rect x="1" y="9" width="20" height="5" rx="2" fill="#7b8894" />
        <rect x="1" y="16" width="20" height="5" rx="2" fill="#6b94b8" />
      </svg>
    ),
  },
  { w: 36, caret: true, icon: <RefreshCw size={20} color="#5a7fa8" /> },
  {
    w: 38,
    caret: true,
    icon: (
      <svg width="22" height="26" viewBox="0 0 22 26">
        <path d="M11 1l10 12-10 12L1 13z" fill="#4a9bd8" />
        <path d="M1 13h20" stroke="#d8ecf8" />
      </svg>
    ),
  },
  {
    w: 42,
    caret: true,
    icon: (
      <svg width="24" height="22" viewBox="0 0 24 22">
        <rect x="1" y="2" width="22" height="18" rx="2" fill="#d9e6ef" stroke="#556" strokeWidth="1.3" />
        <rect x="6" y="6" width="9" height="9" fill="#7aa5c8" />
      </svg>
    ),
  },
  {
    w: 38,
    caret: true,
    icon: (
      <svg width="18" height="26" viewBox="0 0 18 26">
        <path d="M2 2h14v6l-4 3v13H7V11L2 8z" fill="#aaa" stroke="#888" />
      </svg>
    ),
  },
  {
    w: 32,
    caret: true,
    icon: (
      <svg width="24" height="22" viewBox="0 0 24 22">
        <path d="M1 3h11a8 8 0 0 1 0 16H1v-5h11a3 3 0 0 0 0-6H1z" fill="#3b8fd2" />
        <rect x="1" y="3" width="5" height="5" fill="#8cc" />
      </svg>
    ),
  },
];

const sections = [
  { title: "Clearance Height", from: "Retract height", offset: "3 mm" },
  { title: "Retract Height", from: "Stock top", offset: "2 mm", selected: true },
  { title: "Feed Height", from: "Top height", offset: "2 mm", kebab: true },
  { title: "Top Height", from: "Stock top", offset: "0 mm" },
];

const ribbonTabs = [
  { name: "MILLING", w: 86, active: true },
  { name: "TURNING", w: 142 },
  { name: "ADDITIVE", w: 82 },
  { name: "INSPECTION", w: 166 },
  { name: "FABRICATION", w: 100 },
  { name: "UTILITIES", w: 156 },
];

const App = () => (
  <>
    <GlobalStyle />
    <Page>
      <BlackBar />
      <TitleBar>
        <AppLogo>F</AppLogo>
        Autodesk Fusion 360 (Education License)
        <WindowControls>
          <span>–</span>
          <span>❐</span>
          <span>✕</span>
        </WindowControls>
      </TitleBar>
      <Main>
        <DataPanel>
          <PanelHeader>
            <FaUsers size={19} />
            <ProjectName>Acharyascorner</ProjectName>
            <ChevronDown size={18} strokeWidth={2.5} />
            <HeaderTools>
              <RefreshCw size={21} strokeWidth={2.4} />
              <Search size={23} />
              <X size={25} strokeWidth={1.4} />
            </HeaderTools>
          </PanelHeader>
          <DataTabs>
            <DataTab $active>Data</DataTab>
            <DataTab>People</DataTab>
          </DataTabs>
          <DataActions>
            <UploadButton>Upload</UploadButton>
            <NewFolderButton>New Folder</NewFolderButton>
            <GearWrap>
              <FaCog size={20} />
            </GearWrap>
          </DataActions>
          <Breadcrumb>
            <FaHome size={19} color="#666" />
            <CrumbSep>
              <ChevronRight size={20} strokeWidth={3} />
            </CrumbSep>
            DRAG KNIFE TUTORIAL
            <GlobeWrap>
              <FaGlobe size={19} />
            </GlobeWrap>
          </Breadcrumb>
          <EmptyMessage>
            Saved and Uploaded files will
            <br />
            appear here
          </EmptyMessage>
          <UploadFooter>
            Upload progress
            <ProgressTrack>
              <ProgressFill style={{ width: `${(129 / 256) * 100}%` }} />
            </ProgressTrack>
            <PopOut>
              <ExternalLink size={22} strokeWidth={1.6} />
            </PopOut>
          </UploadFooter>
        </DataPanel>
        <Workspace>
          <TabStrip>
            <Qat>
              <QatItem $width={42}>
                <FaTh size={18} />
              </QatItem>
              <QatItem $width={55}>
                <FaFile size={19} />
                <Caret />
              </QatItem>
              <QatItem $width={41}>
                <FaSave size={18} />
              </QatItem>
              <QatItem $width={50}>
                <Undo2 size={19} strokeWidth={2.2} />
                <Caret />
              </QatItem>
              <QatItem $width={40} $faded>
                <Redo2 size={19} strokeWidth={2.2} />
                <Caret />
              </QatItem>
            </Qat>
            <DocTab>
              <CubeMini />
              Untitled*
              <DocClose>
                <X size={19} strokeWidth={1.8} />
              </DocClose>
            </DocTab>
            <PlusButton>
              <Plus size={24} strokeWidth={3} />
            </PlusButton>
            <JobStatus>
              <RefreshCw size={23} strokeWidth={3} />
            </JobStatus>
            <StatusIcons>
              <StatusIcon $width={40}>
                <FaRegClock size={21} />
              </StatusIcon>
              <StatusIcon $width={42}>
                <FaBell size={20} />
                <BellDot />
              </StatusIcon>
              <StatusIcon $width={41}>
                <FaQuestionCircle size={21} />
              </StatusIcon>
              <Avatar>
                <FaUser size={26} />
              </Avatar>
            </StatusIcons>
          </TabStrip>
          <Ribbon>
            <ManufactureButton>
              MANUFACTURE
              <MenuCaret />
            </ManufactureButton>
            <RibbonBody>
              <RibbonTabs>
                {ribbonTabs.map((t) => (
                  <RibbonTab key={t.name} $width={t.w} $active={t.active}>
                    {t.name}
                  </RibbonTab>
                ))}
              </RibbonTabs>
              <RibbonGroups>
                <Group $width={117}>
                  <GroupIcons $gap={13}>
                    <SetupFolderIcon />
                    <GCodeIcon />
                  </GroupIcons>
                  <GroupLabel>
                    SETUP
                    <SmallCaret />
                  </GroupLabel>
                </Group>
                <Group $width={175}>
                  <GroupIcons>
                    <AdaptiveIcon />
                    <PocketIcon />
                    <SelectedTool>
                      <ContourIcon />
                    </SelectedTool>
                  </GroupIcons>
                  <GroupLabel>
                    2D
                    <SmallCaret />
                  </GroupLabel>
                </Group>
                <Group $width={121}>
                  <GroupIcons $gap={12}>
                    <Steep3dIcon />
                    <Plug3dIcon />
                  </GroupIcons>
                  <GroupLabel>
                    3D
                    <SmallCaret />
                  </GroupLabel>
                </Group>
                <Group $width={121}>
                  <GroupIcons $gap={9}>
                    <DrillIcon />
                    <BoreIcon />
                  </GroupIcons>
                  <GroupLabel>
                    DRILLING
                    <SmallCaret />
                  </GroupLabel>
                </Group>
                <Group $width={118}>
                  <GroupIcons>
                    <MultiAxisIcon />
                  </GroupIcons>
                  <GroupLabel>
                    MULTI-AXIS
                    <SmallCaret />
                  </GroupLabel>
                </Group>
                <Group $width={121}>
                  <GroupIcons $gap={9}>
                    <ScissorsIcon />
                    <DeleteIcon />
                  </GroupIcons>
                  <GroupLabel>
                    MODIFY
                    <SmallCaret />
                  </GroupLabel>
                </Group>
                <Group $width={121}>
                  <GroupIcons $gap={14}>
                    <ActionIcon />
                    <G1G2Icon />
                  </GroupIcons>
                  <GroupLabel>
                    ACTIONS
                    <SmallCaret />
                  </GroupLabel>
                </Group>
                <Group $width={122}>
                  <GroupIcons $gap={8}>
                    <ToolLibIcon />
                    <MachineIcon />
                  </GroupIcons>
                  <GroupLabel>
                    MANAGE
                    <SmallCaret />
                  </GroupLabel>
                </Group>
                <Group $width={99}>
                  <GroupIcons>
                    <MeasureIcon />
                  </GroupIcons>
                  <GroupLabel>
                    INSPECT
                    <SmallCaret />
                  </GroupLabel>
                </Group>
                <Group $width={94}>
                  <GroupIcons>
                    <SelectIcon />
                  </GroupIcons>
                  <GroupLabel>
                    SELECT
                    <SmallCaret />
                  </GroupLabel>
                </Group>
              </RibbonGroups>
            </RibbonBody>
          </Ribbon>
          <Viewport>
            <HeightsScene />
            <BrowserPanel>
              <PanelBar>
                <span>◂◂</span>
                <BarLabel $indent={11}>BROWSER</BarLabel>
                <BarTools>
                  <PinDot />
                  <Grip />
                </BarTools>
              </PanelBar>
              <Tree>
                <TreeRow $indent={17}>
                  <Expander>
                    <TreeOpen />
                  </Expander>
                  <Chip>
                    <EyeIcon>
                      <FaEye size={19} />
                    </EyeIcon>
                    <ModelIcon />
                    <ChipText>CAM Root</ChipText>
                  </Chip>
                </TreeRow>
                <TreeRow $indent={67}>
                  <Chip>
                    <UnitsIcon />
                    <ChipText>Units: mm</ChipText>
                  </Chip>
                </TreeRow>
                <TreeRow $indent={39}>
                  <Expander>
                    <TreeClosed />
                  </Expander>
                  <Chip>
                    <FolderSolid />
                    <ChipText>Named Views</ChipText>
                  </Chip>
                </TreeRow>
                <TreeRow $indent={39}>
                  <Expander>
                    <TreeClosed />
                  </Expander>
                  <Chip>
                    <EyeIcon>
                      <FaEye size={19} />
                    </EyeIcon>
                    <FolderSolid />
                    <ChipText>Analysis</ChipText>
                  </Chip>
                </TreeRow>
                <TreeRow $indent={39}>
                  <Expander>
                    <TreeClosed />
                  </Expander>
                  <Chip>
                    <EyeIcon>
                      <FaEye size={19} />
                    </EyeIcon>
                    <ModelIcon />
                    <ChipText>Models</ChipText>
                  </Chip>
                </TreeRow>
                <TreeRow $indent={39}>
                  <Expander>
                    <TreeOpen />
                  </Expander>
                  <Chip>
                    <EyeIcon>
                      <FaEye size={19} />
                    </EyeIcon>
                    <OpenFolderIcon />
                    <ChipText>Setups</ChipText>
                  </Chip>
                </TreeRow>
                <TreeRow $indent={61}>
                  <Expander>
                    <TreeClosed />
                  </Expander>
                  <Chip>
                    <EyeIcon>
                      <FaEye size={19} />
                    </EyeIcon>
                    <WarnWrap>
                      <Warn />
                    </WarnWrap>
                    <OpenFolderIcon />
                    <ActiveSetup>Setup1</ActiveSetup>
                    <Radio />
                  </Chip>
                </TreeRow>
              </Tree>
            </BrowserPanel>
            <CommentsBar>
              <BarLabel $indent={24}>COMMENTS</BarLabel>
              <BarTools>
                <PinDot />
                <Grip />
              </BarTools>
            </CommentsBar>
            <NavBar>
              {navItems.map((item, i) => (
                <NavItem key={i} $width={item.w}>
                  {item.icon}
                  {item.caret && <NavCaret />}
                </NavItem>
              ))}
            </NavBar>
            <Dialog>
              <DialogHeader>
                <Grip />
                <PinDot />
                2D CONTOUR : 2D CONTOUR1
                <BarTools>
                  <CollapseArrows>▸▸</CollapseArrows>
                </BarTools>
              </DialogHeader>
              <DialogTabs>
                <DialogTab>
                  <ToolTabIcon />
                </DialogTab>
                <DialogTab>
                  <GeomTabIcon />
                </DialogTab>
                <DialogTab $active>
                  <HeightsTabIcon />
                </DialogTab>
                <DialogTab>
                  <PassesTabIcon />
                </DialogTab>
                <DialogTab>
                  <LinkTabIcon />
                </DialogTab>
              </DialogTabs>
              <DialogBody>
                <Sections>
                  {sections.map((s) => (
                    <Section key={s.title}>
                      <SectionTitle>
                        <DownTriangle />
                        {s.title}
                      </SectionTitle>
                      <FieldRow>
                        <FieldLabel>From</FieldLabel>
                        <SelectBox>
                          {s.from}
                          <SelectCaret />
                        </SelectBox>
                      </FieldRow>
                      <FieldRow>
                        <FieldLabel>Offset</FieldLabel>
                        <OffsetBox>
                          {s.selected ? <Selected>{s.offset}</Selected> : s.offset}
                        </OffsetBox>
                      </FieldRow>
                      {s.kebab && <Kebab />}
                    </Section>
                  ))}
                  <Section>
                    <SectionTitle>
                      <DownTriangle />
                      Bottom Height
                    </SectionTitle>
                    <FieldRow>
                      <FieldLabel>From</FieldLabel>
                      <SelectBox>
                        Selected contour(s)
                        <SelectCaret />
                      </SelectBox>
                    </FieldRow>
                  </Section>
                </Sections>
                <ScrollTrack>
                  <ScrollThumb />
                </ScrollTrack>
              </DialogBody>
              <IBeam />
              <OffsetTip>Offset</OffsetTip>
              <DialogFooter>
                <FaInfoCircle size={16} />
                <FooterSpacer />
                <FooterButton $width={75}>OK</FooterButton>
                <FooterButton $width={75}>Cancel</FooterButton>
              </DialogFooter>
            </Dialog>
          </Viewport>
        </Workspace>
      </Main>
      <Taskbar>
        <StartCell>
          <FaWindows size={20} />
        </StartCell>
        <SearchBox>
          <Search size={18} />
          Type here to search
          <SearchArt>
            <svg width="90" height="30" viewBox="0 0 90 30">
              <circle cx="4" cy="20" r="2.5" fill="#62d08c" />
              <rect x="15" y="6" width="18" height="24" rx="2" fill="#5a52d8" />
              <path d="M15 10h18M15 15h18" stroke="#e8e8ff" strokeWidth="2" strokeDasharray="3 2" />
              <path d="M66 2c-14 4-24 14-24 28h14c0-10 4-20 10-28z" fill="#a79ab5" />
              <circle cx="72" cy="6" r="3" fill="#f0c23a" />
              <path d="M78 14l4 6-4 6-4-6z" fill="#d85bc8" />
            </svg>
          </SearchArt>
        </SearchBox>
        <AppCell>
          <Search size={20} />
        </AppCell>
        <AppCell>
          <FaRegFolderOpen size={20} />
        </AppCell>
        <AppCell>
          <svg width="26" height="26" viewBox="0 0 26 26">
            <circle cx="13" cy="13" r="12" fill="#2ca4d8" />
            <circle cx="15" cy="17" r="6" fill="#1e2b31" />
            <path d="M2 14c2-8 14-12 22-4" fill="none" stroke="#4fd28a" strokeWidth="3" />
          </svg>
        </AppCell>
        <AppCell>
          <FaFolder size={24} color="#e8b84a" />
        </AppCell>
        <AppCell>
          <svg width="24" height="24" viewBox="0 0 24 24">
            <path d="M12 2l10 7H2z" fill="#eee" />
            <rect x="3" y="11" width="18" height="11" fill="#ddd" />
          </svg>
        </AppCell>
        <AppCell>
          <svg width="26" height="24" viewBox="0 0 26 24">
            <path d="M7 1l6 6-6 6-6-6zM19 1l6 6-6 6-6-6zM13 11l6 6-6 6-6-6z" fill="#eee" />
          </svg>
        </AppCell>
        <AppCell>
          <svg width="24" height="24" viewBox="0 0 24 24">
            <rect x="1" y="1" width="22" height="22" rx="4" fill="#333" />
            <path d="M6 18l6-12 6 12" fill="none" stroke="#777" strokeWidth="2" />
          </svg>
        </AppCell>
        <AppCell>
          <svg width="28" height="28" viewBox="0 0 28 28">
            <circle cx="14" cy="14" r="13" fill="#d8442e" />
            <path d="M14 1a13 13 0 0 1 12 8H14z" fill="#f3c41c" />
            <path d="M2 7l8 14 4 6A13 13 0 0 1 2 7z" fill="#3ba55d" />
            <circle cx="14" cy="14" r="5" fill="#4a8ee0" stroke="#fff" />
          </svg>
        </AppCell>
        <AppCell $bg="#46555c">
          <FusionTile />
        </AppCell>
        <AppCell $bg="#ac6a2c">
          <svg width="28" height="28" viewBox="0 0 28 28">
            <circle cx="14" cy="14" r="13" fill="#1b1b1b" />
            <circle cx="14" cy="14" r="7" fill="none" stroke="#eee" strokeWidth="2" />
          </svg>
        </AppCell>
        <Tray>
          <svg width="28" height="24" viewBox="0 0 28 24">
            <path d="M14 1l9 8H5z" fill="#c9d6e6" />
            <rect x="3" y="9" width="22" height="12" rx="5" fill="#aab8cc" />
          </svg>
          <TrayText>30°C  Light rain</TrayText>
          <TrayIcons>
            <ChevronUp size={18} />
            <Monitor size={18} />
            <FaSearch size={14} />
            <Wifi size={18} />
            <Volume2 size={18} />
            <span>ENG</span>
          </TrayIcons>
          <Clock>08:23 PM</Clock>
          <NoteIcon />
        </Tray>
      </Taskbar>
    </Page>
  </>
);

export default App;
